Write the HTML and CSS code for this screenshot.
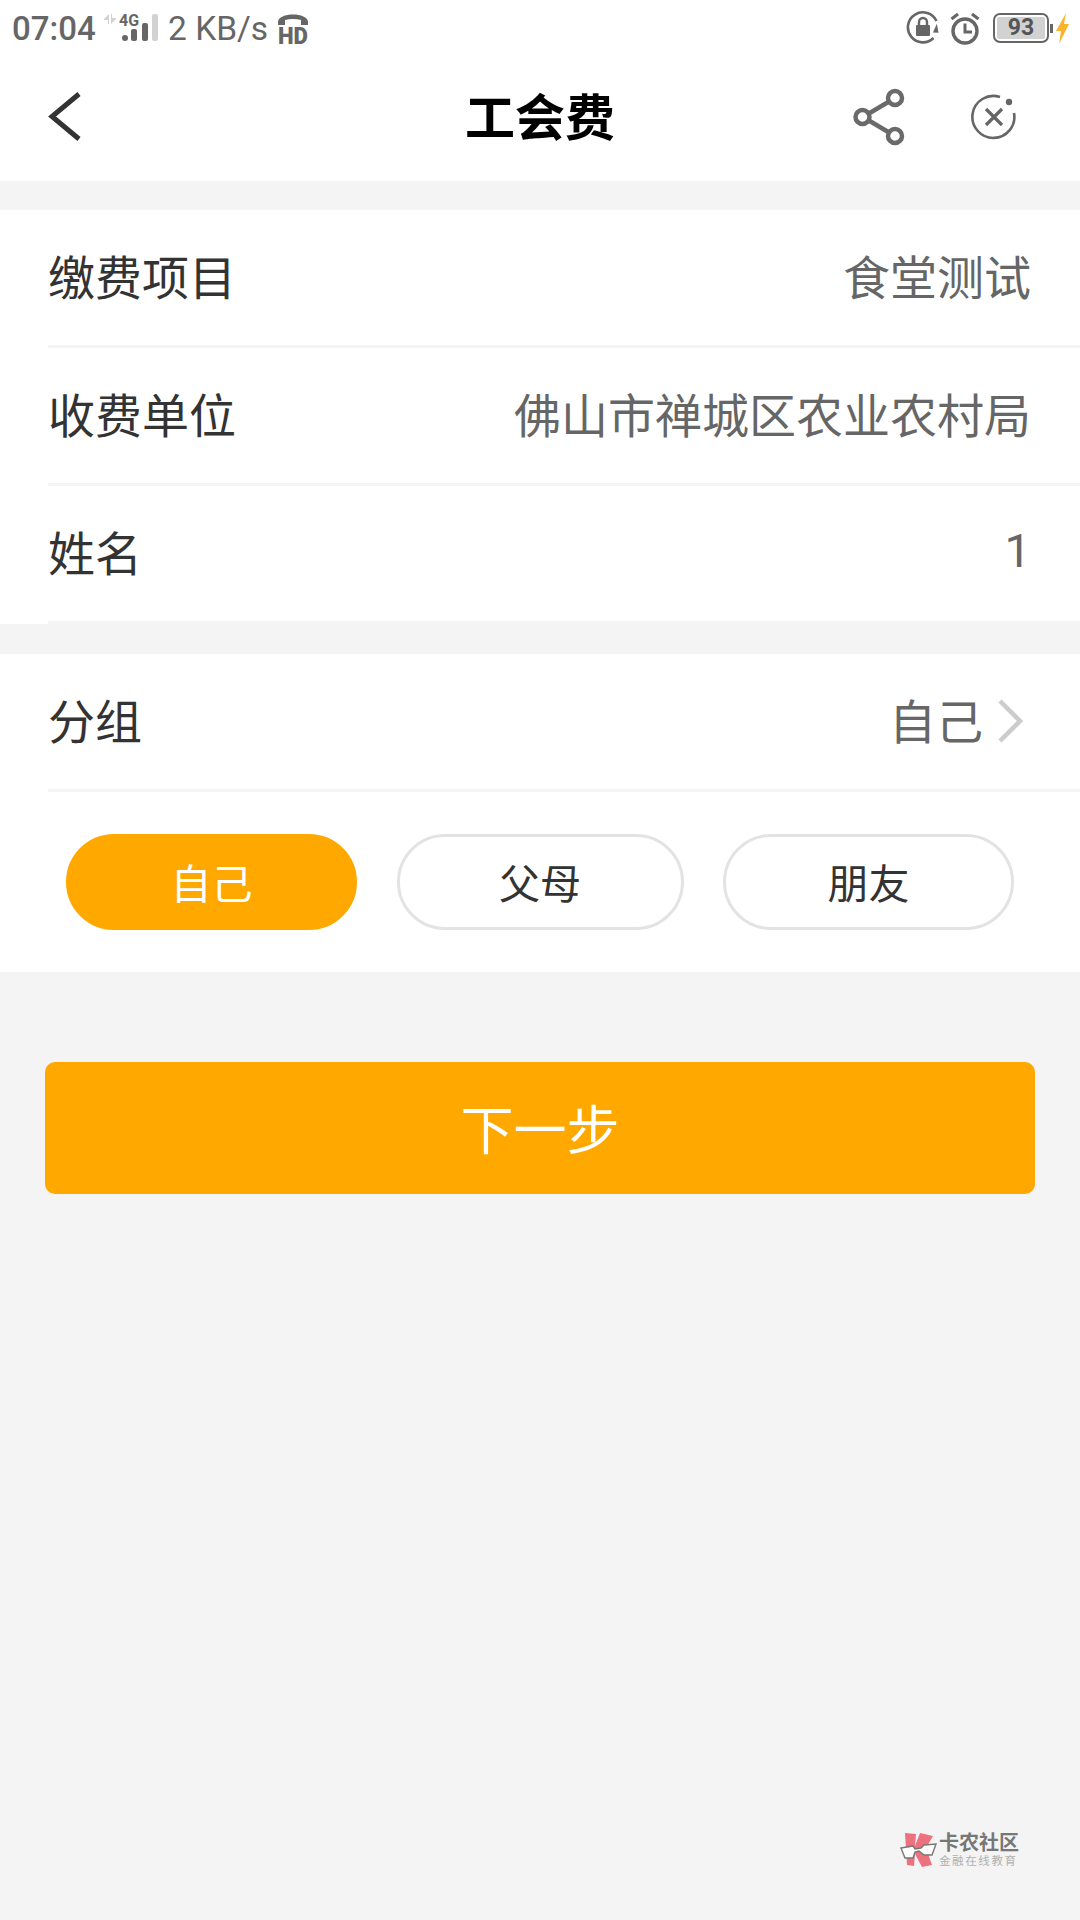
FILE: index.html
```html
<!DOCTYPE html>
<html lang="zh-CN">
<head>
<meta charset="UTF-8">
<meta name="viewport" content="width=device-width, initial-scale=1.0">
<title>工会费</title>
<link rel="stylesheet" href="styles.css">
</head>
<body>

<!-- status bar -->
<div class="status-bar">
  <div class="status-left">
    <span class="status-time">07:04</span>
    <svg class="icon-signal" width="56" height="34" viewBox="0 0 56 34">
      <path d="M6 1 L1 6 L1 7 L5 7 L5 11 L6 11 Z M8 1 L8 11 L13 6 L13 5 L9 5 L9 1 Z" fill="#d2d2d2"/>
      <text x="16" y="13" class="signal-label">4G</text>
      <rect x="19" y="22" width="6" height="6" rx="3" fill="#666"/>
      <rect x="28" y="16" width="6" height="12" rx="2" fill="#666"/>
      <rect x="39" y="10" width="6" height="18" rx="2" fill="#666"/>
      <rect x="49" y="1" width="6" height="27" rx="2" fill="#d2d2d2"/>
    </svg>
    <span class="status-speed">2 KB/s</span>
    <svg class="icon-hd" width="32" height="33" viewBox="0 0 32 33">
      <path d="M1 10 C1 0 31 0 31 10 L31 13 L24 13 L24 8 C19 6.500 13 6.500 8 8 L8 13 L1 13 Z" fill="#666"/>
      <text x="1" y="32" textLength="30" lengthAdjust="spacingAndGlyphs" class="hd-label">HD</text>
    </svg>
  </div>
  <div class="status-right">
    <svg width="34" height="34" viewBox="0 0 34 34">
      <path d="M27.500 27 A15 15 0 1 1 30.500 10" fill="none" stroke="#666" stroke-width="2.600"/>
      <path d="M31.500 13 L26.500 21 L32 22 Z" fill="#666" transform="rotate(-8 30 18)"/>
      <rect x="10" y="14" width="14" height="11" rx="1" fill="#666"/>
      <path d="M13 14 V11 A4 4 0 0 1 21 11 V14" fill="none" stroke="#666" stroke-width="2.400"/>
    </svg>
    <svg class="icon-alarm" width="30" height="33" viewBox="0 0 30 33">
      <circle cx="15" cy="19" r="12" fill="none" stroke="#666" stroke-width="3.400"/>
      <path d="M15 11.500 V20 H22" fill="none" stroke="#666" stroke-width="3"/>
      <path d="M1.500 7 L8 2 M28.500 7 L22 2" fill="none" stroke="#666" stroke-width="3"/>
    </svg>
    <div class="battery">
      <div class="battery-body"><span class="battery-level">93</span></div>
      <span class="battery-nub"></span>
    </div>
    <svg class="icon-bolt" width="13" height="31" viewBox="0 0 13 31">
      <path d="M10 0 L0 18 L5 18 L3 31 L13 11 L8 11 Z" fill="#fbb32f"/>
    </svg>
  </div>
</div>

<!-- title bar -->
<div class="nav-bar">
  <svg class="nav-back" width="36" height="52" viewBox="0 0 36 52">
    <path d="M32 3 L5 25.500 L32 48" fill="none" stroke="#333" stroke-width="5"/>
  </svg>
  <h1 class="nav-title">工会费</h1>
  <div class="nav-actions">
    <svg width="52" height="58" viewBox="0 0 52 58">
      <path d="M10 29 L42 10 M10 29 L42 48" stroke="#6a6a6a" stroke-width="4.500" fill="none"/>
      <circle cx="9.500" cy="29" r="7" fill="#fff" stroke="#6a6a6a" stroke-width="4.500"/>
      <circle cx="42" cy="10" r="7" fill="#fff" stroke="#6a6a6a" stroke-width="4.500"/>
      <circle cx="42" cy="48" r="7" fill="#fff" stroke="#6a6a6a" stroke-width="4.500"/>
    </svg>
    <svg width="46" height="46" viewBox="0 0 46 46">
      <path d="M29 3 A21 21 0 1 0 43 19" fill="none" stroke="#666" stroke-width="2.600"/>
      <circle cx="38" cy="8" r="3.200" fill="#666"/>
      <path d="M15 15 L31 31 M31 15 L15 31" stroke="#666" stroke-width="3.200" fill="none"/>
    </svg>
  </div>
</div>

<!-- payment info -->
<section class="card card-info">
  <div class="row">
    <span class="row-label">缴费项目</span>
    <span class="row-value">食堂测试</span>
  </div>
  <div class="row">
    <span class="row-label">收费单位</span>
    <span class="row-value">佛山市禅城区农业农村局</span>
  </div>
  <div class="row">
    <span class="row-label">姓名</span>
    <span class="row-value">1</span>
  </div>
</section>

<!-- group -->
<section class="card card-group">
  <div class="row">
    <span class="row-label">分组</span>
    <span class="row-value row-value-link">自己
      <svg class="row-arrow" width="26" height="46" viewBox="0 0 26 46">
        <path d="M3 3 L23 23 L3 43" fill="none" stroke="#ccc" stroke-width="4.500"/>
      </svg>
    </span>
  </div>
  <div class="pills">
    <div class="pill pill-active">自己</div>
    <div class="pill">父母</div>
    <div class="pill">朋友</div>
  </div>
</section>

<div class="btn-wrap">
  <div class="btn-next">下一步</div>
</div>

<!-- watermark -->
<div class="watermark">
  <svg width="38" height="36" viewBox="0 0 38 36">
    <path d="M5 1 L16 2 L15 14 L20 1 L33 4 L26 16 L32 33 L22 35 L15 22 L14 34 L7 33 Z" fill="#ec7280"/>
    <path d="M1 16 L13 14 L15 17 L21 16 L24 13 L36 12 L32 23 L24 23 L19 19 L15 20 L13 26 L5 26 Z" fill="#fff" stroke="#777" stroke-width="1.400"/>
  </svg>
  <div class="watermark-text">
    <span class="watermark-name">卡农社区</span>
    <span class="watermark-sub">金融在线教育</span>
  </div>
</div>

</body>
</html>
```

FILE: styles.css
```css
/* base */
html, body {
  margin: 0;
  padding: 0;
}
body {
  position: relative;
  width: 1080px;
  height: 1920px;
  overflow: hidden;
  background-color: #f4f4f4;
  color: #333;
  font-family: Roboto, "Noto Sans CJK SC", "Noto Sans", sans-serif;
}

/* status bar */
.status-bar {
  display: flex;
  justify-content: space-between;
  align-items: center;
  height: 56px;
  padding: 0 11px 0 12px;
  background-color: #fff;
  color: #666;
}
.status-left, .status-right {
  display: flex;
  align-items: center;
}
.status-time {
  font-size: 33px;
  font-weight: 500;
  width: 91px;
}
.icon-signal {
  overflow: visible;
  margin-top: 4px;
}
.signal-label {
  font-size: 16px;
  font-weight: 700;
  fill: #666;
}
.status-speed {
  font-size: 33.500px;
  margin-left: 9px;
}
.icon-hd {
  margin-left: 9px;
  overflow: visible;
}
.hd-label {
  font-size: 24px;
  font-weight: 900;
  fill: #666;
}
.icon-alarm {
  margin-left: 10px;
}
.battery {
  display: flex;
  align-items: center;
  margin-left: 13px;
}
.battery-body {
  box-sizing: border-box;
  width: 56px;
  height: 30px;
  border: 2px solid #666;
  border-radius: 7px;
  padding: 2px;
}
.battery-level {
  display: block;
  height: 22px;
  line-height: 22px;
  background-color: #d2d2d2;
  border-radius: 2px;
  text-align: center;
  font-size: 23px;
  font-weight: 700;
  color: #555;
}
.battery-nub {
  width: 3px;
  height: 9px;
  margin-left: 1px;
  background-color: #666;
}
.icon-bolt {
  margin-left: 3px;
}

/* title bar */
.nav-bar {
  position: relative;
  display: flex;
  justify-content: space-between;
  align-items: center;
  box-sizing: border-box;
  height: 125px;
  padding: 0 63px 4px 47px;
  background-color: #fff;
}
.nav-title {
  margin: 0;
  padding-top: 5px;
  position: absolute;
  left: 0;
  right: 0;
  text-align: center;
  font-size: 50px;
  line-height: 116px;
  font-weight: 700;
  color: #000;
}
.nav-actions {
  display: flex;
  align-items: center;
  gap: 66px;
}

/* rows */
.card {
  background-color: #fff;
}
.card-info {
  margin-top: 29px;
}
.card-group {
  margin-top: 30px;
}
.row {
  display: flex;
  justify-content: space-between;
  align-items: center;
  box-sizing: border-box;
  height: 138px;
  margin-left: 48px;
  padding: 0 49px 7px 0;
  border-bottom: 3px solid #f4f4f4;
}
.row-label {
  font-size: 47px;
  color: #333;
}
.row-value {
  font-size: 47px;
  color: #666;
}
.row-value-link {
  display: flex;
  align-items: center;
  gap: 14px;
  margin-right: 8px;
}
.row-arrow {
  margin-top: 6px;
}

/* group pills */
.pills {
  display: grid;
  grid-template-columns: 291px 287px 291px;
  justify-content: space-between;
  padding: 42px 66px;
}
.pill {
  box-sizing: border-box;
  height: 96px;
  line-height: 97px;
  border: 3px solid #e3e3e3;
  border-radius: 48px;
  text-align: center;
  font-size: 41px;
  color: #333;
}
.pill-active {
  background-color: #ffa800;
  border-color: #ffa800;
  color: #fff;
}

/* next button */
.btn-wrap {
  padding: 90px 45px 0;
}
.btn-next {
  height: 132px;
  line-height: 141px;
  background-color: #ffa800;
  border-radius: 10px;
  text-align: center;
  font-size: 53px;
  color: #fff;
}

/* watermark */
.watermark {
  position: absolute;
  left: 900px;
  top: 1832px;
  display: flex;
  align-items: center;
  gap: 1px;
}
.watermark-text {
  display: flex;
  flex-direction: column;
}
.watermark-name {
  font-size: 20px;
  line-height: 22px;
  font-weight: 700;
  color: #777;
}
.watermark-sub {
  font-size: 11.500px;
  line-height: 14px;
  letter-spacing: 1.600px;
  color: #b0b0b0;
}
```
